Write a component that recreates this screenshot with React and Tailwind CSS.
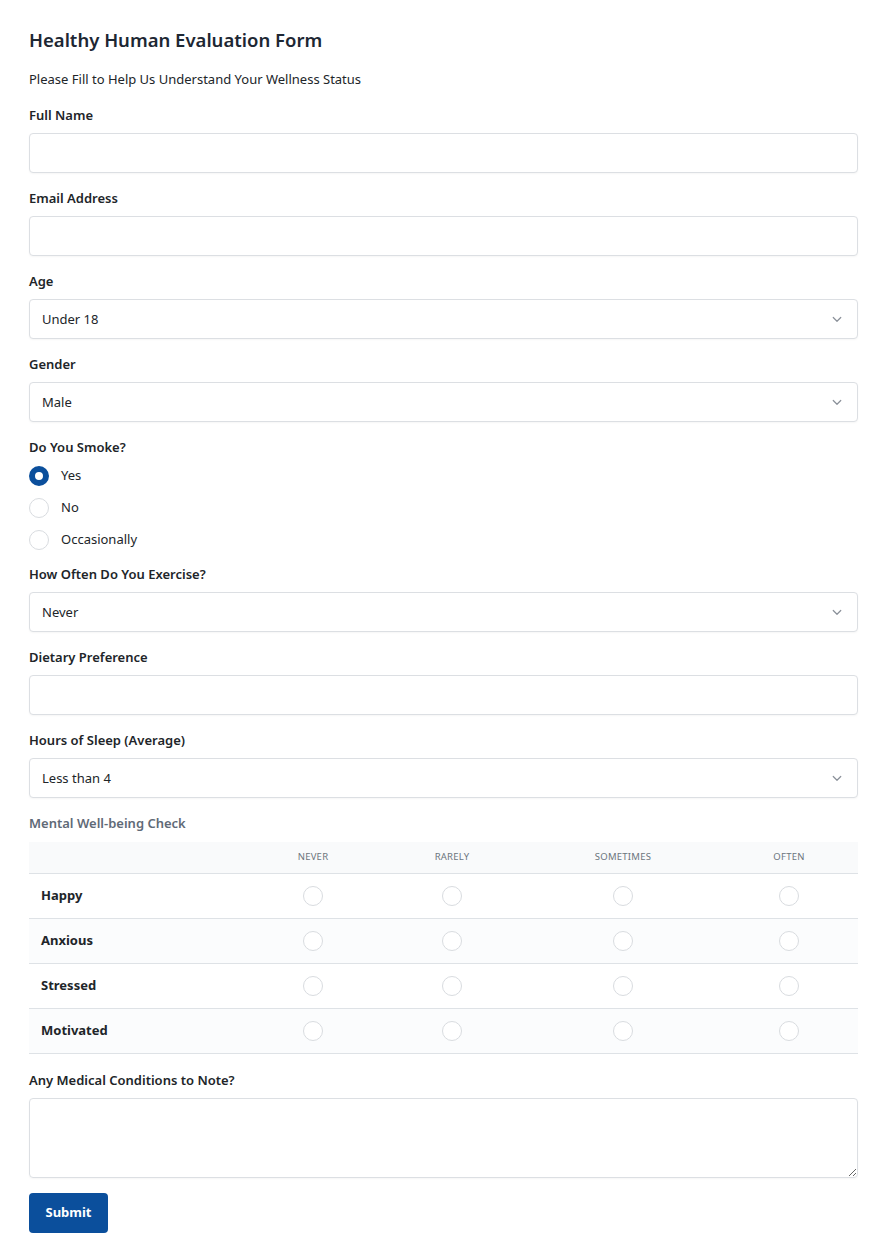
import React, { useState } from 'react';

const inputCls =
  'block w-full h-10 rounded border border-[#dcdfe3] bg-white px-3 text-[13px] text-[#212529] shadow-[0_1px_2px_rgba(0,0,0,0.04)] outline-none';

function Label({ children }) {
  return (
    <label className="block mb-2 text-[13px] leading-[19px] font-semibold text-[#212529]">
      {children}
    </label>
  );
}

function Chevron() {
  return (
    <svg
      className="pointer-events-none absolute right-[15px] top-1/2 -translate-y-1/2"
      width="12"
      height="12"
      viewBox="0 0 16 16"
      fill="none"
      stroke="#8a9099"
      strokeWidth="1.6"
      strokeLinecap="round"
      strokeLinejoin="round"
    >
      <path d="M3 6l5 5 5-5" />
    </svg>
  );
}

function Select({ value, options }) {
  return (
    <div className="relative">
      <select defaultValue={value} className={inputCls + ' appearance-none pr-10 pt-px'}>
        {options.map((o) => (
          <option key={o}>{o}</option>
        ))}
      </select>
      <Chevron />
    </div>
  );
}

function Radio({ checked, onClick }) {
  return (
    <span
      onClick={onClick}
      className={
        'inline-block w-5 h-5 rounded-full shrink-0 cursor-pointer ' +
        (checked
          ? 'border-[6px] border-[#0b4f9c] bg-white'
          : 'border border-[#d9dce0] bg-white')
      }
    />
  );
}

const moods = ['Happy', 'Anxious', 'Stressed', 'Motivated'];
const freq = ['Never', 'Rarely', 'Sometimes', 'Often'];

export default function App() {
  const [smoke, setSmoke] = useState('Yes');
  const [mood, setMood] = useState({});

  return (
    <div
      className="bg-white min-h-[1256px] pl-[29px] pr-[28px] pt-[26px] text-[#212529]"
      style={{ fontFamily: '"Noto Sans", "Open Sans", sans-serif' }}
    >
      <h1 className="text-[18.5px] leading-[28px] font-semibold text-[#1d2733]">
        Healthy Human Evaluation Form
      </h1>
      <p className="mt-[16px] mb-[17px] text-[13px] leading-[19px]">
        Please Fill to Help Us Understand Your Wellness Status
      </p>

      <div className="mb-4">
        <Label>Full Name</Label>
        <input type="text" className={inputCls} />
      </div>
      <div className="mb-4">
        <Label>Email Address</Label>
        <input type="email" className={inputCls} />
      </div>
      <div className="mb-4">
        <Label>Age</Label>
        <Select value="Under 18" options={['Under 18', '18-30', '31-45', '46-60', 'Over 60']} />
      </div>
      <div className="mb-4">
        <Label>Gender</Label>
        <Select value="Male" options={['Male', 'Female', 'Other']} />
      </div>

      <div className="mb-[13px]">
        <label className="block mb-[7px] text-[13px] leading-[19px] font-semibold">
          Do You Smoke?
        </label>
        <div className="flex flex-col gap-2">
          {['Yes', 'No', 'Occasionally'].map((o) => (
            <div key={o} className="flex items-center h-6 gap-3">
              <Radio checked={smoke === o} onClick={() => setSmoke(o)} />
              <span className="text-[13px]">{o}</span>
            </div>
          ))}
        </div>
      </div>

      <div className="mb-4">
        <Label>How Often Do You Exercise?</Label>
        <Select value="Never" options={['Never', '1-2 times a week', '3-4 times a week', 'Daily']} />
      </div>
      <div className="mb-4">
        <Label>Dietary Preference</Label>
        <input type="text" className={inputCls} />
      </div>
      <div className="mb-4">
        <Label>Hours of Sleep (Average)</Label>
        <Select value="Less than 4" options={['Less than 4', '4-6', '6-8', 'More than 8']} />
      </div>

      <div className="text-[13px] leading-[19px] font-semibold text-[#5f6a77] mb-[9px]">
        Mental Well-being Check
      </div>
      <div className="text-[13px]">
        <div className="grid grid-cols-[219px_130px_148px_194px_138px] h-[32px] items-center bg-[#f9fafb] border-b border-[#dee2e6] text-[9.5px] tracking-wide uppercase text-[#6c757d]">
          <div />
          {freq.map((f) => (
            <div key={f} className="text-center">{f}</div>
          ))}
        </div>
        {moods.map((m, i) => (
          <div
            key={m}
            className={
              'grid grid-cols-[219px_130px_148px_194px_138px] h-[45px] items-center border-b border-[#dee2e6] ' +
              (i % 2 === 1 ? 'bg-[#fbfcfd]' : 'bg-white')
            }
          >
            <div className="pl-3 font-bold text-[13px]">{m}</div>
            {freq.map((f) => (
              <div key={f} className="flex justify-center">
                <Radio checked={mood[m] === f} onClick={() => setMood({ ...mood, [m]: f })} />
              </div>
            ))}
          </div>
        ))}
      </div>

      <div className="mt-[17px] mb-[15px]">
        <Label>Any Medical Conditions to Note?</Label>
        <textarea className="block w-full h-20 rounded border border-[#dcdfe3] px-3 py-2 text-[13px] shadow-[0_1px_2px_rgba(0,0,0,0.04)] outline-none" />
      </div>

      <button
        type="submit"
        className="h-10 w-[79px] rounded bg-[#0b4f9c] text-white text-[13px] font-bold"
      >
        Submit
      </button>
    </div>
  );
}
